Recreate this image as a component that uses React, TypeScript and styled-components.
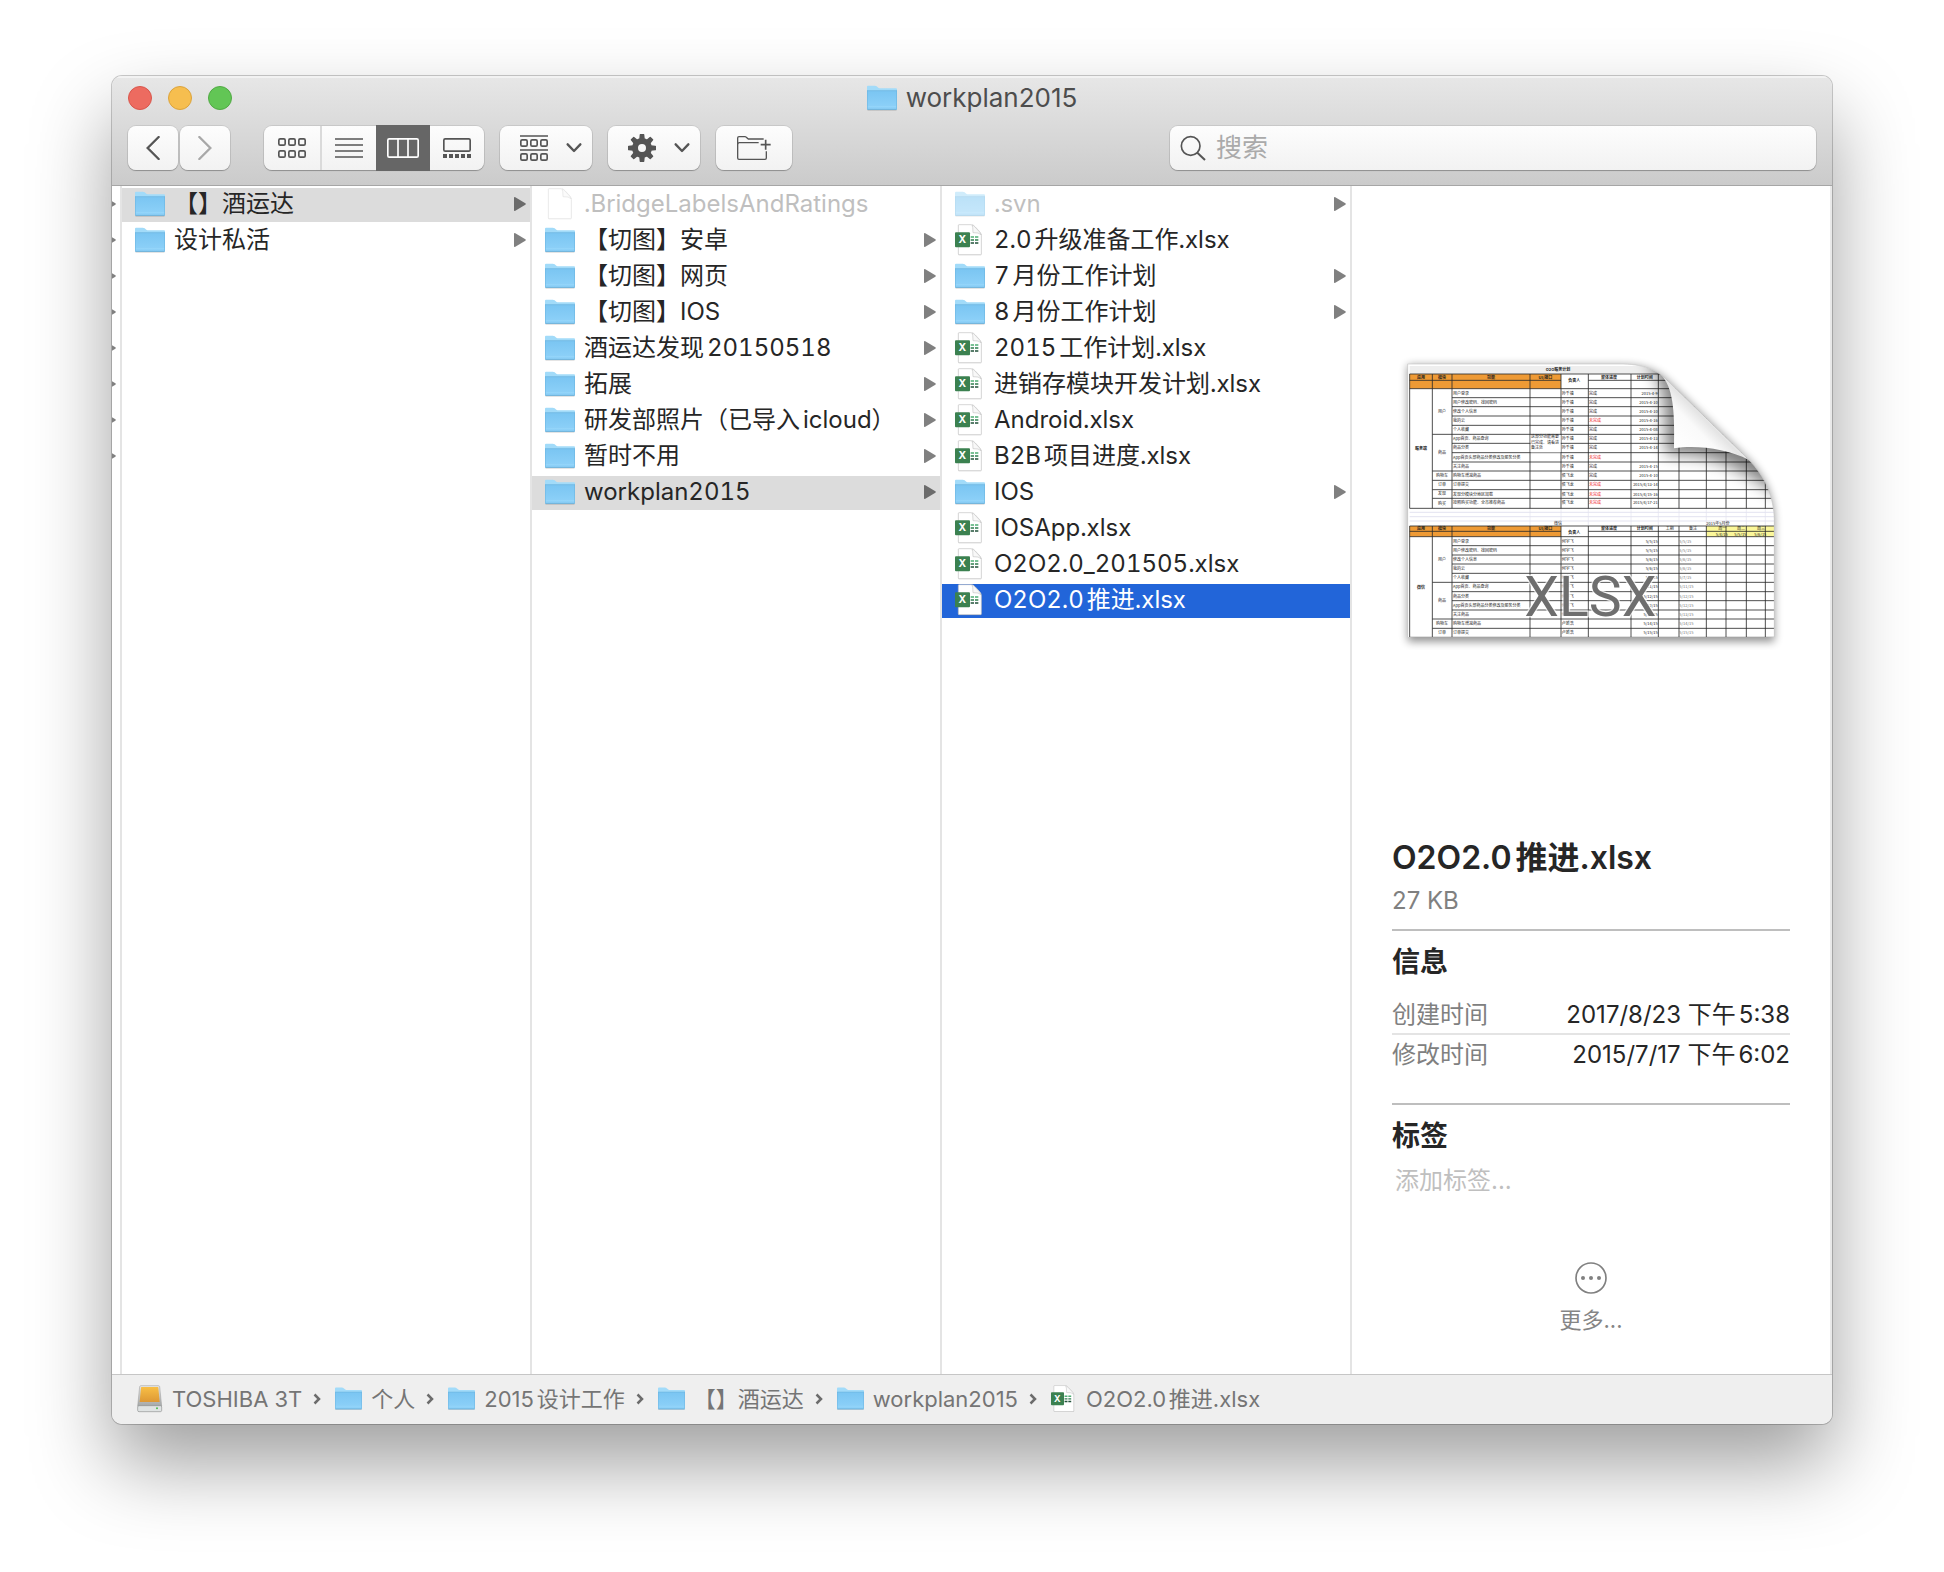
import React from 'react';
import styled, { createGlobalStyle, css } from 'styled-components';

const GlobalStyle = createGlobalStyle`
  *, *::before, *::after { box-sizing: border-box; }
  body {
    margin: 0;
    background: #ffffff;
    color: #262626;
    font-family: Inter, "Noto Sans CJK SC", sans-serif;
    font-size: 24px;
    line-height: 32px;
    text-autospace: normal;
  }
  button, input { font: inherit; color: inherit; }
  svg { display: block; flex: none; }
`;

const Desktop = styled.div`
  display: flex;
  min-height: 100vh;
  padding: 76px 112px 148px;
`;

const Window = styled.main`
  flex: 1;
  min-width: 0;
  display: flex;
  flex-direction: column;
  overflow: hidden;
  border-radius: 10px;
  background: #ffffff;
  box-shadow: 0 0 0 1px rgba(0, 0, 0, 0.2), 0 40px 80px rgba(0, 0, 0, 0.38);
`;

/* ---------- title bar and toolbar ---------- */

const Header = styled.header`
  display: flex;
  flex-direction: column;
  gap: 6px;
  padding: 0 16px 15px;
  border-bottom: 1px solid #a6a6a6;
  background: linear-gradient(#e7e7e7, #cbcbcb);
  box-shadow: inset 0 2px 0 #f2f2f2;
`;

const TitleRow = styled.div`
  display: grid;
  grid-template-columns: 1fr auto 1fr;
  align-items: center;
  height: 44px;
`;

const Lights = styled.div`
  display: flex;
  gap: 16px;
`;

const Light = styled.button<{ $fill: string; $edge: string }>`
  width: 24px;
  height: 24px;
  padding: 0;
  border: 1px solid ${(p) => p.$edge};
  border-radius: 50%;
  background: ${(p) => p.$fill};
`;

const Title = styled.h1`
  display: flex;
  align-items: center;
  gap: 9px;
  margin: 0;
  font-size: 26px;
  font-weight: 400;
  color: #4d4d4d;
`;

const Toolbar = styled.div`
  display: flex;
  align-items: center;
  gap: 16px;
`;

const raised = css`
  border: 0;
  border-radius: 8px;
  background: linear-gradient(#fdfdfd, #f2f2f2);
  box-shadow: 0 0 0 1px rgba(0, 0, 0, 0.08), 0 1px 1px rgba(0, 0, 0, 0.25);
`;

const NavPair = styled.div`
  display: flex;
  gap: 2px;
  margin-right: 18px;
`;

const ToolButton = styled.button<{ $width: number; $menu?: boolean }>`
  ${raised}
  display: flex;
  align-items: center;
  justify-content: ${(p) => (p.$menu ? 'space-between' : 'center')};
  width: ${(p) => p.$width}px;
  height: 44px;
  padding: ${(p) => (p.$menu ? '0 10px 0 20px' : '0')};
  color: #555555;
  &:disabled { color: #a8a8a8; }
`;

const Segments = styled.div`
  ${raised}
  display: flex;
  height: 44px;
`;

const Segment = styled.button<{ $divided?: boolean }>`
  display: flex;
  align-items: center;
  justify-content: center;
  width: 54px;
  padding: 0;
  border: 0;
  background: none;
  color: #555555;
  ${(p) => p.$divided && css`
    width: 58px;
    border-right: 2px solid #dadada;
  `}
  &[aria-pressed='true'] {
    background: #666666;
    color: #ffffff;
    box-shadow: 0 0 0 1px #666666;
    clip-path: inset(-1px 0);
  }
`;

const SearchBox = styled.label`
  ${raised}
  flex: 0 1 646px;
  display: flex;
  align-items: center;
  gap: 10px;
  height: 44px;
  margin-left: auto;
  padding: 0 10px;
  color: #555555;
`;

const SearchInput = styled.input`
  flex: 1;
  min-width: 0;
  padding: 0;
  border: 0;
  outline: 0;
  background: none;
  font-size: 26px;
  &::placeholder { color: #aaaaaa; opacity: 1; }
`;

/* ---------- column browser ---------- */

const Browser = styled.div`
  flex: 1;
  display: grid;
  grid-template-columns: 10px 41fr 41fr 41fr 48fr;
`;

const Column = styled.ul`
  display: flex;
  flex-direction: column;
  gap: 2px;
  min-width: 0;
  margin: 0;
  padding: 2px 0 0;
  border-right: 2px solid #e4e4e4;
  list-style: none;
  overflow: hidden;
`;

const Item = styled.button<{ $state?: 'open' | 'selected'; $dim?: boolean }>`
  display: flex;
  align-items: center;
  gap: 9px;
  width: 100%;
  height: 34px;
  padding: 0 4px 2px 13px;
  border: 0;
  text-align: left;
  white-space: nowrap;
  font-variant-numeric: tabular-nums;
  color: ${(p) => (p.$state === 'selected' ? '#ffffff' : p.$dim ? '#bfbfbf' : '#262626')};
  background: ${(p) =>
    p.$state === 'selected' ? '#2265d9' : p.$state === 'open' ? '#dcdcdc' : 'transparent'};
`;

const IconCell = styled.span<{ $dim?: boolean }>`
  flex: none;
  display: flex;
  width: 30px;
  opacity: ${(p) => (p.$dim ? 0.5 : 1)};
`;

const ItemName = styled.span`
  flex: 1;
  min-width: 0;
`;

const Sliver = styled.div`
  display: flex;
  flex-direction: column;
  gap: 22px;
  padding-top: 11px;
  border-right: 2px solid #e4e4e4;
`;

const SliverArrow = styled.span`
  display: flex;
  justify-content: flex-end;
  width: 4px;
  height: 14px;
  overflow: hidden;
`;

/* ---------- preview ---------- */

const Preview = styled.section`
  display: flex;
  flex-direction: column;
  min-width: 0;
  padding: 0 40px 40px;
  border-right: 2px solid #e9e9e9;
`;

const Artwork = styled.div`
  flex: 1;
  display: flex;
  align-items: center;
  justify-content: center;
  padding-bottom: 24px;
  text-autospace: no-autospace;
  & > svg {
    width: 100%;
    max-width: 398px;
    height: auto;
    flex: 0 1 auto;
  }
`;

const FileName = styled.h2`
  margin: 0 0 7px;
  font-size: 32px;
  line-height: 40px;
  font-weight: 600;
`;

const FileSize = styled.p`
  margin: 0 0 12px;
  color: #808080;
`;

const Section = styled.section`
  padding-top: 13px;
  border-top: 2px solid #bebebe;
`;

const SectionTitle = styled.h3`
  margin: 0;
  font-size: 28px;
  line-height: 36px;
  font-weight: 600;
`;

const Facts = styled.dl`
  margin: 15px 0 30px;
`;

const Fact = styled.div`
  display: flex;
  justify-content: space-between;
  padding-top: 2px;
  line-height: 36px;
  white-space: nowrap;
  & + & { border-top: 2px solid #e4e4e4; }
  & > dt { color: #808080; }
  & > dd { margin: 0; }
`;

const TagInput = styled.input`
  display: block;
  width: 100%;
  height: 32px;
  margin: 11px 0 65px;
  padding: 0 3px;
  border: 0;
  outline: 0;
  background: none;
  &::placeholder { color: #bfbfbf; opacity: 1; }
`;

const MoreButton = styled.button`
  align-self: center;
  display: flex;
  flex-direction: column;
  align-items: center;
  gap: 12px;
  padding: 0;
  border: 0;
  background: none;
  font-size: 22px;
  line-height: 28px;
  color: #858585;
`;

/* ---------- path bar ---------- */

const PathBar = styled.nav`
  height: 50px;
  padding: 0 25px 2px;
  border-top: 1px solid #c6c6c6;
  background: #efefef;
`;

const Crumbs = styled.ol`
  display: flex;
  align-items: center;
  gap: 14px;
  height: 100%;
  margin: 0;
  padding: 0;
  list-style: none;
  font-size: 22px;
  white-space: nowrap;
`;

const Crumb = styled.li`
  display: flex;
  align-items: center;
  gap: 11px;
  color: #6c6c6c;
`;

const CrumbLink = styled.a`
  display: flex;
  align-items: center;
  gap: 9px;
  color: #757575;
  text-decoration: none;
`;

/* ---------- icons ---------- */

type IconKind = 'folder' | 'xlsx' | 'doc' | 'drive';

const FolderIcon = ({ width = 30 }: { width?: number }) => (
  <svg width={width} height={(width * 26) / 30} viewBox="0 0 90 78" aria-hidden="true">
    <defs>
      <linearGradient id="folderFront" x1="0" y1="0" x2="0" y2="1">
        <stop offset="0" stopColor="#7ac5f2" />
        <stop offset="1" stopColor="#8fd2f9" />
      </linearGradient>
    </defs>
    <path d="M1 71h88v4q0 2-2 2H3q-2 0-2-2z" fill="#000" opacity=".14" />
    <path d="M0 5q0-3 3-3h20q4 0 6 2l5 4q3 2 6 2h47q3 0 3 3v50H0z" fill="#a2dbf9" />
    <path d="M0 17h90v54q0 3-3 3H3q-3 0-3-3z" fill="url(#folderFront)" />
    <path d="M0 17h90" stroke="#68b2de" strokeWidth="2" />
    <path d="M1 64h88" stroke="#9bd9fa" strokeWidth="2" />
    <path d="M1 73h88" stroke="#6db0d8" strokeWidth="3" />
    <path d="M1 17v55M89 17v55" stroke="#6bb4df" strokeWidth="2" />
  </svg>
);

const Sheet = () => (
  <>
    <path d="M10 3h42l27 28v61q0 2-2 2H12q-2 0-2-2z" fill="#000" opacity=".15" />
    <path d="M10 4q0-2 2-2h37q6 0 12 7l12 13q6 7 6 12v56q0 2-2 2H12q-2 0-2-2z" fill="#fff" stroke="#c4c4c4" strokeWidth="2" />
    <path d="M51 3q3 4 3 23q18-1 24 6q-2-6-6-10L59 8q-4-4-8-5z" fill="#f8f8f8" stroke="#c6c6c6" strokeWidth="2" />
  </>
);

const DocIcon = () => (
  <svg width="30" height="32" viewBox="0 0 90 96" aria-hidden="true">
    <Sheet />
  </svg>
);

const XlsxIcon = ({ width = 30 }: { width?: number }) => (
  <svg width={width} height={(width * 32) / 30} viewBox="0 0 90 96" aria-hidden="true">
    <Sheet />
    {['#4fae74', '#2f7d4f', '#22523a'].map((c, r) => (
      <path key={c} d={`M47 ${39 + r * 9}h10M60 ${39 + r * 9}h10`} stroke={c} strokeWidth="5" />
    ))}
    <rect x="0" y="25" width="45" height="45" rx="3" fill="#3b8150" />
    <text x="22" y="58" textAnchor="middle" fontFamily="Inter, sans-serif" fontWeight="700" fontSize="31" fill="#fff">X</text>
  </svg>
);

const DriveIcon = () => (
  <svg width="26" height="28" viewBox="0 0 78 84" aria-hidden="true">
    <defs>
      <linearGradient id="driveTop" x1="0" y1="0" x2="0" y2="1">
        <stop offset="0" stopColor="#f8bf45" />
        <stop offset="1" stopColor="#dd9835" />
      </linearGradient>
      <linearGradient id="driveBody" x1="0" y1="0" x2="0" y2="1">
        <stop offset="0" stopColor="#e6e6e6" />
        <stop offset="1" stopColor="#a5a8a8" />
      </linearGradient>
    </defs>
    <path d="M8 5q1-3 4-3h52q3 0 4 3l6 58H2z" fill="url(#driveBody)" stroke="#999" strokeWidth="1.5" />
    <path d="M12 8q0-2 2-2h48q2 0 2 2l4 43H8z" fill="url(#driveTop)" />
    <rect x="2" y="62" width="72" height="18" rx="4" fill="#dfe3e3" stroke="#8f9292" strokeWidth="2" />
    <circle cx="60" cy="70" r="3" fill="#4dbb4d" />
  </svg>
);

const FileIcon = ({ kind }: { kind: IconKind }) =>
  kind === 'folder' ? <FolderIcon /> : kind === 'xlsx' ? <XlsxIcon /> : <DocIcon />;

const Arrow = ({ dark }: { dark?: boolean }) => (
  <svg width="12" height="14" viewBox="0 0 36 42" aria-hidden="true">
    <path d="M0 3q0-4 4-2l30 18q3 2 0 4L4 41q-4 2-4-2z" fill={dark ? '#6b6b6b' : '#808080'} />
  </svg>
);

const Squares = ({ y }: { y: number }) => (
  <>
    {[0, 30, 60].map((x) => (
      <rect key={x} x={x + 2.5} y={y + 2.5} width="19" height="19" rx="4" />
    ))}
  </>
);

const GridIcon = () => (
  <svg width="28" height="20" viewBox="0 0 84 60" fill="none" stroke="currentColor" strokeWidth="5">
    <Squares y={0} />
    <Squares y={36} />
  </svg>
);

const ListIcon = () => (
  <svg width="28" height="20" viewBox="0 0 84 60" stroke="currentColor" strokeWidth="5">
    <path d="M0 3h84M0 21h84M0 39h84M0 57h84" />
  </svg>
);

const ColumnsIcon = () => (
  <svg width="32" height="20" viewBox="0 0 96 60" fill="none" stroke="currentColor" strokeWidth="5">
    <rect x="2.5" y="2.5" width="91" height="55" rx="4" />
    <path d="M33 2v56M63 2v56" />
  </svg>
);

const GalleryIcon = () => (
  <svg width="28" height="20" viewBox="0 0 84 60" fill="none" stroke="currentColor">
    <rect x="2.5" y="2.5" width="79" height="37" rx="4" strokeWidth="5" />
    <path d="M0 54h84" strokeWidth="12" strokeDasharray="12 6" />
  </svg>
);

const ArrangeIcon = () => (
  <svg width="28" height="26" viewBox="0 0 84 78" fill="none" stroke="currentColor" strokeWidth="5">
    <path d="M0 3h84M0 45h84" />
    <Squares y={12} />
    <Squares y={54} />
  </svg>
);

const DownIcon = () => (
  <svg width="16" height="10" viewBox="0 0 48 30" fill="none" stroke="currentColor" strokeWidth="7" strokeLinecap="round" strokeLinejoin="round">
    <path d="M5 4l19 20L43 4" />
  </svg>
);

const GearIcon = () => (
  <svg width="28" height="28" viewBox="-42 -42 84 84" aria-hidden="true">
    {[0, 45, 90, 135, 180, 225, 270, 315].map((a) => (
      <path key={a} d="M-9-20L-7-40q0-2 2-2H5q2 0 2 2l2 20z" transform={`rotate(${a})`} fill="currentColor" />
    ))}
    <circle r="21" fill="none" stroke="currentColor" strokeWidth="18" />
  </svg>
);

const NewFolderIcon = () => (
  <svg width="34" height="24" viewBox="0 0 102 72" fill="none" stroke="currentColor">
    <path d="M80 9H34L27 3Q26 2 24 2H6Q2 2 2 6v60q0 4 4 4h78q4 0 4-4V46" strokeWidth="4" />
    <path d="M2 25q0-5 5-5h58" strokeWidth="4" />
    <path d="M86 11v30M71 26h30" strokeWidth="5" />
  </svg>
);

const BackIcon = ({ flip }: { flip?: boolean }) => (
  <svg width="14" height="24" viewBox="0 0 42 72" fill="none" stroke="currentColor" strokeWidth="7" strokeLinecap="round">
    <path d={flip ? 'M4 3l33 33L4 69' : 'M38 3L5 36l33 33'} />
  </svg>
);

const SearchIcon = () => (
  <svg width="26" height="26" viewBox="0 0 78 78" fill="none" stroke="currentColor" strokeWidth="5">
    <circle cx="32" cy="33" r="28" />
    <path d="M52 53l23 22" strokeWidth="6" />
  </svg>
);

const CrumbChevron = () => (
  <svg width="8" height="12" viewBox="0 0 8 12" fill="none" stroke="currentColor" strokeWidth="2.5" aria-hidden="true">
    <path d="M1.500 1.500L6 6l-4.500 4.500" />
  </svg>
);

const MoreIcon = () => (
  <svg width="32" height="32" viewBox="0 0 96 96" fill="none" stroke="#808080" strokeWidth="5" aria-hidden="true">
    <circle cx="48" cy="48" r="45" />
    {[24, 48, 72].map((x) => (
      <circle key={x} cx={x} cy="48" r="6" fill="#808080" stroke="none" />
    ))}
  </svg>
);

/* ---------- spreadsheet page with a curled corner ---------- */

const topRows = [146, 173, 200, 228, 256, 283, 310, 338, 366, 393, 421, 449, 475, 505];
const bottomRows = [590, 617, 645, 672, 700, 727, 755, 782, 810, 837, 865, 892];
const detailCols = [451, 544, 626, 754, 836, 898, 980, 1039, 1100, 1157];
const tasks = [
  '用户登录', '用户修改密码、找回密码', '修改个人信息', '我的云', '个人收藏', 'App首页、商品查询', '商品分类',
  'App首页头部商品分类修改及服务分类', '关注商品', '购物车增减商品', '订单提交', '发现分模块分地区加载', '按照购买功能、全市推荐商品',
];
const states = [1, 1, 1, 0, 1, 1, 1, 0, 1, 1, 0, 0, 0];
const topDates = [
  '2015-4-9', '2015-4-10', '2015-4-10', '2015-4-16', '2015-4-08', '2015-4-13', '2015-4-14', '', '2015-4-15',
  '2015-4-10', '2015/4/13-14', '2015/4/15-16', '2015/4/17-21',
];
const bottomDates = ['5/5/15', '5/5/15', '5/6/15', '5/6/15', '5/7/15', '5/11/15', '5/12/15', '5/12/15', '5/13/15', '5/14/15', '5/15/15'];
const headings: [number, string][] = [[124, '应用'], [187, '模块'], [334, '功能'], [497, 'UI/接口'], [688, '整体进度'], [795, '计划时间']];

const HeadRow = ({ y }: { y: number }) => (
  <g>
    {headings.map(([x, label]) => (
      <text key={label} x={x} y={y} textAnchor="middle" fontWeight="700">{label}</text>
    ))}
    <text x="584" y={y + 11} textAnchor="middle" fontWeight="700">负责人</text>
  </g>
);

const hLines = (ys: number[], groups: number[], last: number) =>
  ys
    .map((y) => (y === last || y === ys[0] ? `M90 ${y}H1184` : groups.includes(y) ? `M158 ${y}H1184` : `M217 ${y}H1184`))
    .join('');

const SheetPreview = () => (
  <svg viewBox="37 30 1194 900" role="img" aria-label="XLSX">
    <defs>
      <clipPath id="page">
        <path d="M84 72H730C800 73 840 96 866 124L1108 360C1158 412 1182 470 1184 540V891H84Z" />
      </clipPath>
      <linearGradient id="curl" gradientUnits="userSpaceOnUse" x1="890" y1="320" x2="985" y2="225">
        <stop offset="0" stopColor="#ffffff" />
        <stop offset=".6" stopColor="#fafafa" />
        <stop offset=".88" stopColor="#e4e4e4" />
        <stop offset="1" stopColor="#f4f4f4" />
      </linearGradient>
      <filter id="soft" x="-20%" y="-20%" width="140%" height="140%">
        <feGaussianBlur stdDeviation="24" />
      </filter>
      <filter id="drop" x="-10%" y="-10%" width="120%" height="125%">
        <feGaussianBlur stdDeviation="12" />
      </filter>
    </defs>
    <path d="M84 76H730C800 77 840 96 866 124L1108 360C1158 412 1182 470 1184 540V905H84Z" fill="#000" opacity=".42" filter="url(#drop)" />
    <g clipPath="url(#page)" fontFamily='"Noto Sans CJK SC", sans-serif' fontSize="12" fill="#222">
      <rect x="84" y="72" width="1100" height="820" fill="#fff" />
      <rect x="90" y="78" width="1094" height="24" fill="#eeeeee" />
      <rect x="90" y="102" width="454" height="44" fill="#ee9a35" />
      <rect x="90" y="558" width="454" height="32" fill="#ee9a35" />
      <rect x="980" y="558" width="204" height="32" fill="#fbf79a" />
      <path d="M90 517H1184M90 530H1184M90 543H1184" stroke="#d5d5e8" strokeWidth="2" />
      <path d={detailCols.map((x) => `M${x} 505V558`).join('')} stroke="#e3e3ee" strokeWidth="2" />
      <g stroke="#2b2b2b" strokeWidth="2.5" fill="none">
        <path d="M90 102H1184M90 121H544M626 121H1184M90 558H1184M90 574H544M626 574H1184" />
        <path d={hLines(topRows, [283, 393, 421, 449, 475], 505)} />
        <path d={hLines(bottomRows, [727, 837, 865], 892)} />
        <path d={[90, 158, 217, ...detailCols].map((x) => `M${x} 102V505M${x} 558V892`).join('')} />
      </g>
      <rect x="453" y="285" width="90" height="52" fill="#fff" />
      <text x="454" y="295">这部分功能需要</text>
      <text x="454" y="311">已完成、请看进</text>
      <text x="454" y="327">备注处</text>
      <text x="535" y="94" textAnchor="middle" fontWeight="700">O2O服务计划</text>
      <text x="535" y="555" textAnchor="middle">微信</text>
      <text x="980" y="555">2015年5月份</text>
      <HeadRow y={116} />
      <HeadRow y={571} />
      <text x="858" y="571">工期</text>
      <text x="928" y="571">备注</text>
      {[1022, 1078, 1138].map((x, i) => (
        <g key={x}>
          <text x={x - 6} y="571">{['周一', '周二', '周三'][i]}</text>
          <text x={x - 14} y="587">{`5/${i + 4}/15`}</text>
        </g>
      ))}
      <text x="124" y="330" textAnchor="middle" fontWeight="700">服务端</text>
      <text x="124" y="746" textAnchor="middle" fontWeight="700">微信</text>
      {[0, 444].map((dy) => (
        <g key={dy}>
          <text x="187" y={219 + dy} textAnchor="middle">用户</text>
          <text x="187" y={342 + dy} textAnchor="middle">商品</text>
          <text x="187" y={411 + dy} textAnchor="middle">购物车</text>
          <text x="187" y={438 + dy} textAnchor="middle">订单</text>
        </g>
      ))}
      <text x="187" y="466" textAnchor="middle">发现</text>
      <text x="187" y="495" textAnchor="middle">购买</text>
      {tasks.map((task, i) => (
        <g key={task}>
          <text x="220" y={topRows[i] + 18}>{task}</text>
          <text x="546" y={topRows[i] + 18}>{i < 9 ? '孙千禧' : '侯飞龙'}</text>
          <text x="628" y={topRows[i] + 18} fill={states[i] ? '#222' : '#ee2222'}>{states[i] ? '完成' : '未完成'}</text>
          <text x="834" y={topRows[i] + 18} textAnchor="end">{topDates[i]}</text>
        </g>
      ))}
      {bottomDates.map((date, i) => (
        <g key={i}>
          <text x="220" y={bottomRows[i] + 18}>{tasks[i]}</text>
          <text x="546" y={bottomRows[i] + 18}>{i < 9 ? '何宇飞' : '卢新浩'}</text>
          <text x="834" y={bottomRows[i] + 18} textAnchor="end">{date}</text>
          <text x="899" y={bottomRows[i] + 18} fill="#777">{date}</text>
        </g>
      ))}
      <path d="M800 60C870 140 850 230 862 345C960 335 1060 360 1200 470V380L900 60Z" fill="#000" opacity=".5" filter="url(#soft)" />
    </g>
    <path d="M846 106C878 145 886 200 883 325C950 315 1040 325 1108 360L866 124Z" fill="url(#curl)" />
    <path d="M84 891V72H730C800 73 840 96 866 124L1108 360C1158 412 1182 470 1184 540V891" fill="none" stroke="#c9c9c9" strokeWidth="2" />
    <text x="434" y="828" fontFamily="Roboto, sans-serif" fontSize="166" fill="#6e6e6e" stroke="#ffffff" strokeOpacity=".7" strokeWidth="8" paintOrder="stroke">XLSX</text>
  </svg>
);

/* ---------- data ---------- */

interface Entry {
  name: string;
  kind?: IconKind;
  dim?: boolean;
  state?: 'open' | 'selected';
}

const columns: Entry[][] = [
  [{ name: '【】酒运达', state: 'open' }, { name: '设计私活' }],
  [
    { name: '.BridgeLabelsAndRatings', kind: 'doc', dim: true },
    { name: '【切图】安卓' },
    { name: '【切图】网页' },
    { name: '【切图】IOS' },
    { name: '酒运达发现20150518' },
    { name: '拓展' },
    { name: '研发部照片（已导入icloud）' },
    { name: '暂时不用' },
    { name: 'workplan2015', state: 'open' },
  ],
  [
    { name: '.svn', dim: true },
    { name: '2.0升级准备工作.xlsx', kind: 'xlsx' },
    { name: '7月份工作计划' },
    { name: '8月份工作计划' },
    { name: '2015工作计划.xlsx', kind: 'xlsx' },
    { name: '进销存模块开发计划.xlsx', kind: 'xlsx' },
    { name: 'Android.xlsx', kind: 'xlsx' },
    { name: 'B2B项目进度.xlsx', kind: 'xlsx' },
    { name: 'IOS' },
    { name: 'IOSApp.xlsx', kind: 'xlsx' },
    { name: 'O2O2.0_201505.xlsx', kind: 'xlsx' },
    { name: 'O2O2.0推进.xlsx', kind: 'xlsx', state: 'selected' },
  ],
];

const crumbs: { name: string; kind: IconKind }[] = [
  { name: 'TOSHIBA 3T', kind: 'drive' },
  { name: '个人', kind: 'folder' },
  { name: '2015设计工作', kind: 'folder' },
  { name: '【】酒运达', kind: 'folder' },
  { name: 'workplan2015', kind: 'folder' },
  { name: 'O2O2.0推进.xlsx', kind: 'xlsx' },
];

const App: React.FC = () => (
  <>
    <GlobalStyle />
    <Desktop>
      <Window>
        <Header>
          <TitleRow>
            <Lights>
              <Light $fill="#ed6b60" $edge="#d8564c" aria-label="关闭" />
              <Light $fill="#f6be4f" $edge="#dba33c" aria-label="最小化" />
              <Light $fill="#62c655" $edge="#51a944" aria-label="缩放" />
            </Lights>
            <Title>
              <FolderIcon />
              workplan2015
            </Title>
          </TitleRow>
          <Toolbar>
            <NavPair>
              <ToolButton $width={50} aria-label="后退"><BackIcon /></ToolButton>
              <ToolButton $width={50} aria-label="前进" disabled><BackIcon flip /></ToolButton>
            </NavPair>
            <Segments role="group" aria-label="显示方式">
              <Segment $divided aria-label="图标" aria-pressed="false"><GridIcon /></Segment>
              <Segment aria-label="列表" aria-pressed="false"><ListIcon /></Segment>
              <Segment aria-label="分栏" aria-pressed="true"><ColumnsIcon /></Segment>
              <Segment aria-label="画廊" aria-pressed="false"><GalleryIcon /></Segment>
            </Segments>
            <ToolButton $width={92} $menu aria-label="排列"><ArrangeIcon /><DownIcon /></ToolButton>
            <ToolButton $width={92} $menu aria-label="操作"><GearIcon /><DownIcon /></ToolButton>
            <ToolButton $width={76} aria-label="新建文件夹"><NewFolderIcon /></ToolButton>
            <SearchBox>
              <SearchIcon />
              <SearchInput type="text" placeholder="搜索" aria-label="搜索" />
            </SearchBox>
          </Toolbar>
        </Header>

        <Browser>
          <Sliver aria-hidden="true">
            {Array.from({ length: 8 }, (_, i) => (
              <SliverArrow key={i}><Arrow /></SliverArrow>
            ))}
          </Sliver>
          {columns.map((entries, c) => (
            <Column key={c}>
              {entries.map(({ name, kind = 'folder', dim, state }) => (
                <li key={name}>
                  <Item $state={state} $dim={dim}>
                    <IconCell $dim={dim}><FileIcon kind={kind} /></IconCell>
                    <ItemName>{name}</ItemName>
                    {kind === 'folder' && <Arrow dark={state === 'open'} />}
                  </Item>
                </li>
              ))}
            </Column>
          ))}
          <Preview>
            <Artwork><SheetPreview /></Artwork>
            <FileName>O2O2.0推进.xlsx</FileName>
            <FileSize>27 KB</FileSize>
            <Section>
              <SectionTitle>信息</SectionTitle>
              <Facts>
                <Fact><dt>创建时间</dt><dd>2017/8/23 下午5:38</dd></Fact>
                <Fact><dt>修改时间</dt><dd>2015/7/17 下午6:02</dd></Fact>
              </Facts>
            </Section>
            <Section>
              <SectionTitle><label htmlFor="tags">标签</label></SectionTitle>
              <TagInput id="tags" type="text" placeholder="添加标签..." />
            </Section>
            <MoreButton><MoreIcon />更多...</MoreButton>
          </Preview>
        </Browser>

        <PathBar aria-label="路径">
          <Crumbs>
            {crumbs.map(({ name, kind }, i) => (
              <Crumb key={name}>
                <CrumbLink href="#">
                  {kind === 'drive' ? <DriveIcon /> : kind === 'xlsx' ? <XlsxIcon width={26} /> : <FolderIcon width={27} />}
                  {name}
                </CrumbLink>
                {i < crumbs.length - 1 && <CrumbChevron />}
              </Crumb>
            ))}
          </Crumbs>
        </PathBar>
      </Window>
    </Desktop>
  </>
);

export default App;
